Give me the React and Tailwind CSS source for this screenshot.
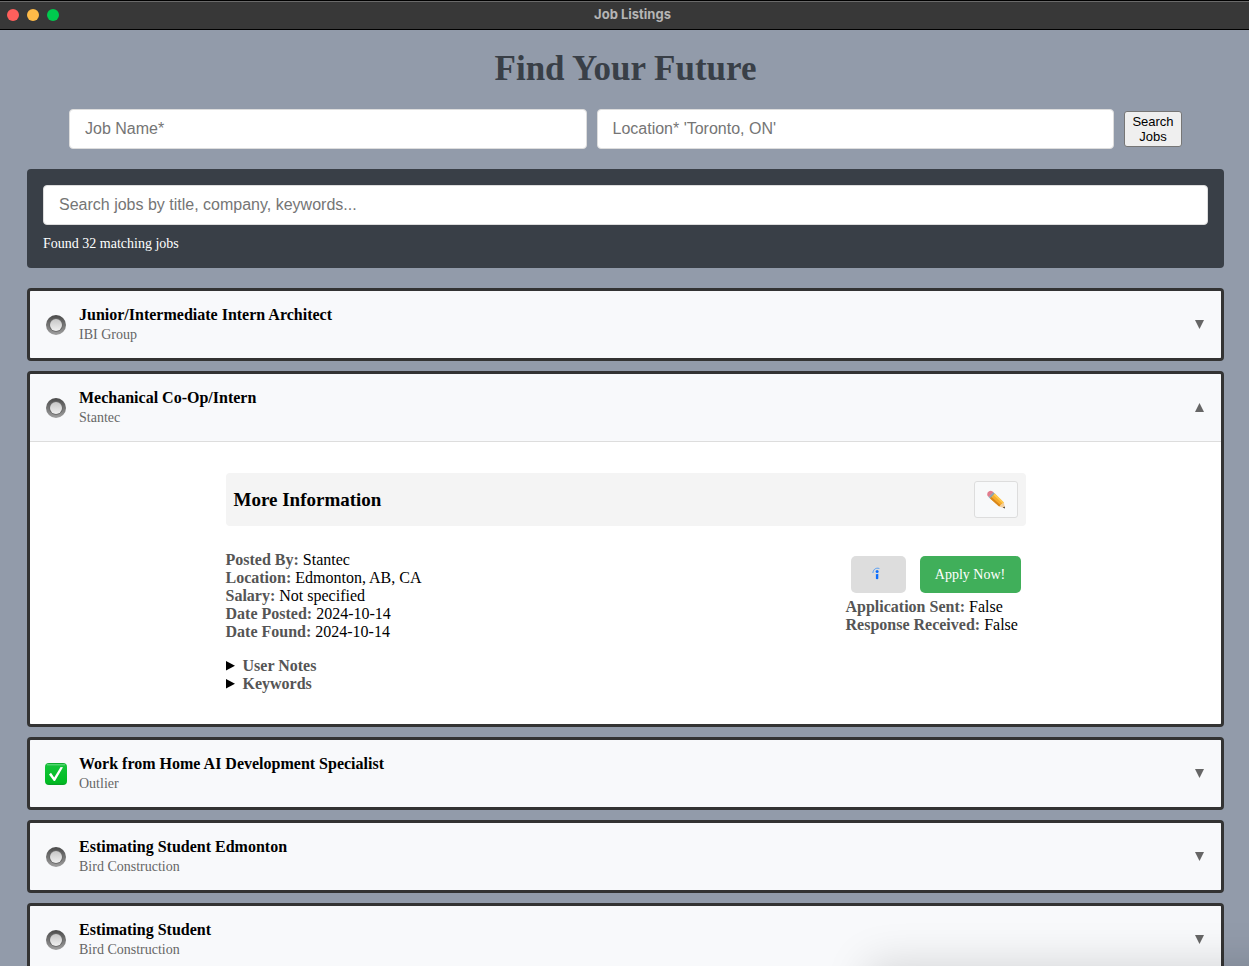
import { useState } from "react";

const jobs = [
  { id: 1, title: "Junior/Intermediate Intern Architect", company: "IBI Group" },
  {
    id: 2,
    title: "Mechanical Co-Op/Intern",
    company: "Stantec",
    location: "Edmonton, AB, CA",
    posted: "2024-10-14",
    found: "2024-10-14",
  },
  { id: 3, title: "Work from Home AI Development Specialist", company: "Outlier", applied: true },
  { id: 4, title: "Estimating Student Edmonton", company: "Bird Construction" },
  { id: 5, title: "Estimating Student", company: "Bird Construction" },
];

function RadioIcon() {
  return (
    <svg width="22" height="22" viewBox="0 0 22 22" aria-hidden="true">
      <defs>
        <linearGradient id="ring" x1="0" y1="0" x2="0" y2="1">
          <stop offset="0" stopColor="#4a4a4a" />
          <stop offset="1" stopColor="#a0a0a0" />
        </linearGradient>
        <linearGradient id="ringInner" x1="0" y1="0" x2="0" y2="1">
          <stop offset="0" stopColor="#6c6c6c" />
          <stop offset="1" stopColor="#626262" />
        </linearGradient>
        <linearGradient id="knob" x1="0" y1="0" x2="0" y2="1">
          <stop offset="0" stopColor="#c6c6c6" />
          <stop offset="1" stopColor="#f0f0f0" />
        </linearGradient>
      </defs>
      <circle cx="11" cy="11" r="10" fill="url(#ring)" />
      <circle cx="11" cy="11" r="6.8" fill="url(#ringInner)" />
      <circle cx="11" cy="11" r="6" fill="url(#knob)" />
    </svg>
  );
}

function CheckIcon() {
  return (
    <svg width="22" height="22" viewBox="0 0 22 22" aria-hidden="true">
      <defs>
        <linearGradient id="green" x1="0" y1="0" x2="0" y2="1">
          <stop offset="0" stopColor="#0fa52e" />
          <stop offset="0.15" stopColor="#12c437" />
          <stop offset="0.9" stopColor="#00bb22" />
          <stop offset="1" stopColor="#0a9a25" />
        </linearGradient>
      </defs>
      <rect width="22" height="22" rx="4" fill="url(#green)" />
      <rect x="1.5" y="1" width="19" height="1.6" rx="0.8" fill="#4fd66c" />
      <path d="M4 11.4 6 9.8 9.2 14.4 15.6 4 18 4.3 10 18 8.8 18Z" fill="#fff" />
    </svg>
  );
}

function PencilIcon() {
  return (
    <svg width="20" height="20" viewBox="0 0 20 20" aria-hidden="true">
      <path d="M1.2 5Q.8 2.4 3 1.2 5 .2 6.5 1.5L7.6 2.5 2.9 7.2Q1.4 6 1.2 5Z" fill="#e27c8d" />
      <path d="M2.7 6.9 7.3 2.2 9 3.8 4.2 8.7Z" fill="#8ba3b2" />
      <path d="M4.1 8.6 8.8 3.6 17.9 12.6 13.2 16.4Z" fill="#f7ac2c" />
      <path d="M4.1 8.6 5.5 7.1 14.7 15.2 13.2 16.4Z" fill="#d9861a" />
      <path d="M7.5 5 8.8 3.6 17.9 12.6 16.6 13.6Z" fill="#ffcb50" />
      <path d="M13.2 16.4 17.9 12.6 19 18.6Z" fill="#f2cf9e" />
      <path d="M16.8 17.6 18.7 16.6 19 18.6Z" fill="#403a36" />
    </svg>
  );
}

function IndeedIcon() {
  return (
    <svg width="13" height="15" viewBox="0 0 13 15" aria-hidden="true">
      <path d="M.9 6C1 3 3.6.2 7.4 1.5" fill="none" stroke="#4c97f5" strokeWidth="0.9" />
      <circle cx="5.1" cy="4.4" r="1.5" fill="#0d6efd" />
      <path d="M3.9 7.1Q5.1 7.4 6.3 6.8V11.5Q6.3 12.3 5.1 12.3 3.9 12.3 3.9 11.5Z" fill="#0d6efd" />
    </svg>
  );
}

function Arrow({ up }) {
  return (
    <svg width="10" height="10" viewBox="0 0 10 10" aria-hidden="true">
      <path d={up ? "M4.5 0 9 9H0Z" : "M4.5 9 0 0H9Z"} fill="#666" />
    </svg>
  );
}

function Field({ label, children }) {
  return (
    <div>
      <strong className="text-[#555]">{label}:</strong> {children}
    </div>
  );
}

function Disclosure({ title, children }) {
  const [open, setOpen] = useState(false);
  return (
    <div>
      <button
        type="button"
        aria-expanded={open}
        onClick={() => setOpen(!open)}
        className="flex items-center gap-[7px] font-bold text-[#555]"
      >
        <svg width="10" height="10" viewBox="0 0 10 10" aria-hidden="true" className={open ? "rotate-90" : ""}>
          <path d="M0 0 9 4.8 0 9.6Z" fill="#000" />
        </svg>
        {title}
      </button>
      {open && children}
    </div>
  );
}

function Details({ job }) {
  return (
    <div className="border-t border-[#ddd] bg-white px-4 py-[31px]">
      <div className="mx-auto max-w-[800px]">
        <div className="flex items-center justify-between rounded bg-[#f4f4f4] p-2">
          <h3 className="pt-px text-[19px] font-bold">More Information</h3>
          <button
            type="button"
            aria-label="Edit"
            className="flex h-[37px] w-11 items-center justify-center rounded-[3px] border border-[#ddd] bg-[#f8f9fa]"
          >
            <PencilIcon />
          </button>
        </div>
        <div className="flex items-start justify-between pt-[25px] leading-[18px]">
          <div>
            <Field label="Posted By">{job.company}</Field>
            <Field label="Location">{job.location}</Field>
            <Field label="Salary">Not specified</Field>
            <Field label="Date Posted">{job.posted}</Field>
            <Field label="Date Found">{job.found}</Field>
            <div className="pt-4">
              <Disclosure title="User Notes">No notes yet</Disclosure>
              <Disclosure title="Keywords">No keywords</Disclosure>
            </div>
          </div>
          <div className="w-[180px] pt-[5px]">
            <div className="mb-[5px] flex gap-[14px] pl-[5px]">
              <a
                href="#indeed"
                aria-label="View on Indeed"
                className="flex h-[37px] w-[55px] items-center justify-center rounded-[5px] bg-[#ddd]"
              >
                <IndeedIcon />
              </a>
              <a
                href="#apply"
                className="flex h-[37px] w-[101px] items-center justify-center rounded-[5px] bg-[#40af5a] text-sm text-white"
              >
                Apply Now!
              </a>
            </div>
            <Field label="Application Sent">False</Field>
            <Field label="Response Received">False</Field>
          </div>
        </div>
      </div>
    </div>
  );
}

function JobCard({ job, open, onToggle }) {
  return (
    <li className="overflow-hidden rounded border-[3px] border-[#333]">
      <button
        type="button"
        aria-expanded={open}
        onClick={onToggle}
        className="flex w-full items-center gap-3 bg-[#f8f9fb] py-[14px] pr-4 pl-[15px] text-left"
      >
        {job.applied ? <CheckIcon /> : <RadioIcon />}
        <span className="flex-1">
          <span className="block text-base leading-5 font-bold">{job.title}</span>
          <span className="block text-sm leading-[19px] text-[#666]">{job.company}</span>
        </span>
        <Arrow up={open} />
      </button>
      {open && <Details job={job} />}
    </li>
  );
}

const inputClass =
  "h-10 w-full min-w-0 rounded border border-[#ddd] bg-white px-[15px] font-['Liberation_Sans',Arial,sans-serif] text-base text-black placeholder:text-[#757575]";

export default function App() {
  const [openId, setOpenId] = useState(2);
  return (
    <div className="relative h-screen overflow-hidden bg-[#929baa] font-['Liberation_Serif','Times_New_Roman',serif] text-base text-black">
      <header className="flex h-[30px] items-center border-t border-b border-black bg-[#383838] px-[7px] shadow-[inset_0_1px_0_#6a6a6a]">
        <div className="flex flex-1 gap-2">
          <button type="button" aria-label="Close" className="size-3 rounded-full bg-[#ff5f5c]" />
          <button type="button" aria-label="Minimize" className="size-3 rounded-full bg-[#ffbb48]" />
          <button type="button" aria-label="Zoom" className="size-3 rounded-full bg-[#00ca4e]" />
        </div>
        <span className="ml-4 font-['Inter',sans-serif] text-[13px] font-bold text-[#b5b5b5]">Job Listings</span>
        <div className="flex-1" />
      </header>

      <main className="pr-[25px] pl-[27px]">
        <h1 className="pt-[19px] text-center text-[35px] leading-10 font-bold text-[#393f47]">Find Your Future</h1>

        <form className="mt-5 flex items-center gap-[10px] px-[42px]" onSubmit={(e) => e.preventDefault()}>
          <input className={inputClass} type="text" aria-label="Job Name" placeholder="Job Name*" />
          <input className={inputClass} type="text" aria-label="Location" placeholder="Location* 'Toronto, ON'" />
          <button
            type="submit"
            className="h-9 w-[58px] shrink-0 rounded-[3px] border border-[#767676] bg-[#efefef] font-['Liberation_Sans',Arial,sans-serif] text-[13px] leading-[15px]"
          >
            Search Jobs
          </button>
        </form>

        <section className="mt-5 rounded bg-[#393f47] px-4 pt-4 pb-[14px]">
          <input
            className={inputClass}
            type="search"
            aria-label="Search jobs"
            placeholder="Search jobs by title, company, keywords..."
          />
          <p className="mt-[9px] text-sm leading-5 text-white">Found 32 matching jobs</p>
        </section>

        <ul className="mt-5 flex flex-col gap-[10px]">
          {jobs.map((job) => (
            <JobCard
              key={job.id}
              job={job}
              open={openId === job.id}
              onToggle={() => setOpenId(openId === job.id ? null : job.id)}
            />
          ))}
        </ul>
      </main>

      <div className="pointer-events-none absolute top-full right-[-60px] left-[870px] h-20 shadow-[0_0_44px_2px_rgba(0,0,0,0.15)]" />
    </div>
  );
}
